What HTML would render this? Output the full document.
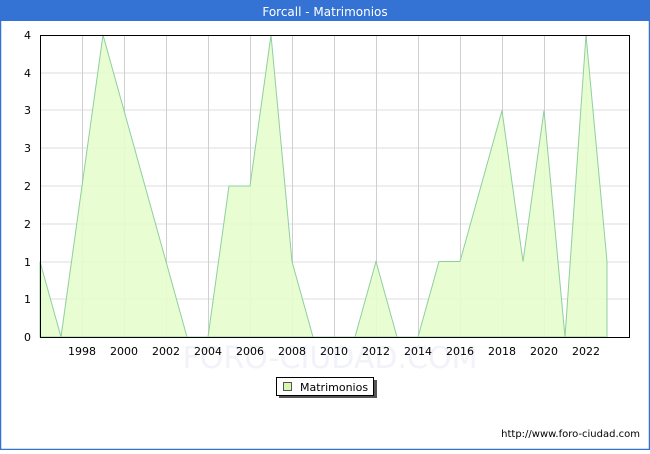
<!DOCTYPE html>
<html><head><style>
body{margin:0;width:650px;height:450px;overflow:hidden;background:#fff;font-family:"DejaVu Sans","Liberation Sans",sans-serif}
</style></head><body>
<svg width="650" height="450" xmlns="http://www.w3.org/2000/svg" font-family="DejaVu Sans, Liberation Sans, sans-serif">
<rect x="0.5" y="0.5" width="649" height="449" fill="#fff" stroke="#3473d4" stroke-width="1.5"/>
<rect x="0" y="0" width="650" height="21" fill="#3473d4"/>
<text x="325" y="16" fill="#fff" font-size="12" text-anchor="middle">Forcall - Matrimonios</text>
<text x="330" y="368" fill="#f2f2fa" font-size="30" text-anchor="middle">FORO-CIUDAD.COM</text>
<g stroke="#dcdcdc" stroke-width="1">
<line x1="40" y1="299" x2="630" y2="299"/><line x1="40" y1="262" x2="630" y2="262"/><line x1="40" y1="224" x2="630" y2="224"/><line x1="40" y1="186" x2="630" y2="186"/><line x1="40" y1="148" x2="630" y2="148"/><line x1="40" y1="110" x2="630" y2="110"/><line x1="40" y1="73" x2="630" y2="73"/>
</g>
<g stroke="#cfcfcf" stroke-width="1">
<line x1="82.5" y1="35" x2="82.5" y2="337"/><line x1="124.5" y1="35" x2="124.5" y2="337"/><line x1="166.5" y1="35" x2="166.5" y2="337"/><line x1="208.5" y1="35" x2="208.5" y2="337"/><line x1="250.5" y1="35" x2="250.5" y2="337"/><line x1="292.5" y1="35" x2="292.5" y2="337"/><line x1="334.5" y1="35" x2="334.5" y2="337"/><line x1="376.5" y1="35" x2="376.5" y2="337"/><line x1="418.5" y1="35" x2="418.5" y2="337"/><line x1="460.5" y1="35" x2="460.5" y2="337"/><line x1="502.5" y1="35" x2="502.5" y2="337"/><line x1="544.5" y1="35" x2="544.5" y2="337"/><line x1="586.5" y1="35" x2="586.5" y2="337"/>
</g>
<polygon fill="#e6fdcc" fill-opacity="0.9" stroke="#8fcf9f" stroke-width="1" points="40,337 40,261.5 61,337 82,186 103,35 124,110.5 145,186 166,261.5 187,337 208,337 229,186 250,186 271,35 292,261.5 313,337 334,337 355,337 376,261.5 397,337 418,337 439,261.5 460,261.5 481,186 502,110.5 523,261.5 544,110.5 565,337 586,35 607,261.5 607,337"/>
<rect x="40.5" y="35.5" width="589" height="302" fill="none" stroke="#000" stroke-width="1"/>
<g font-size="11" fill="#000" text-anchor="end">
<text x="31" y="341">0</text><text x="31" y="303">1</text><text x="31" y="266">1</text><text x="31" y="228">2</text><text x="31" y="190">2</text><text x="31" y="152">3</text><text x="31" y="114">3</text><text x="31" y="77">4</text><text x="31" y="39">4</text>
</g>
<g font-size="11" fill="#000" text-anchor="middle">
<text x="82" y="355">1998</text><text x="124" y="355">2000</text><text x="166" y="355">2002</text><text x="208" y="355">2004</text><text x="250" y="355">2006</text><text x="292" y="355">2008</text><text x="334" y="355">2010</text><text x="376" y="355">2012</text><text x="418" y="355">2014</text><text x="460" y="355">2016</text><text x="502" y="355">2018</text><text x="544" y="355">2020</text><text x="586" y="355">2022</text>
</g>
<rect x="279" y="380" width="98" height="18" fill="#555"/>
<rect x="276.5" y="377.5" width="97" height="18" fill="#fff" stroke="#000" stroke-width="1"/>
<rect x="283.5" y="382.5" width="8" height="8" fill="#d6f8b0" stroke="#555" stroke-width="1"/>
<text x="300" y="391" font-size="11" fill="#000">Matrimonios</text>
<text x="640" y="437" font-size="10" fill="#000" text-anchor="end">http://www.foro-ciudad.com</text>
</svg>
</body></html>
